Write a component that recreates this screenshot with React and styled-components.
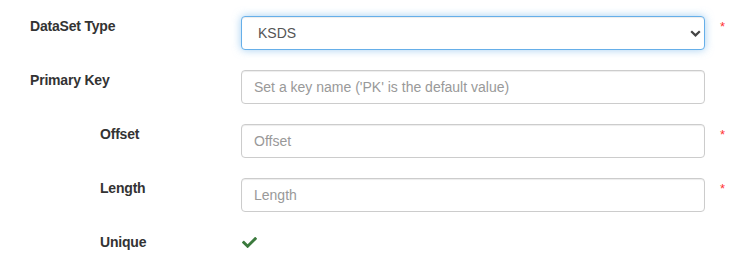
import React from "react";
import styled, { createGlobalStyle } from "styled-components";
import { FaCheck } from "react-icons/fa";

const Global = createGlobalStyle`
  html, body { margin: 0; padding: 0; background: #fff; }
  body { font-family: "Liberation Sans", Arial, sans-serif; font-size: 14px; line-height: 20px; color: #333; }
  * { box-sizing: border-box; }
`;

const Form = styled.form`
  display: grid;
  grid-template-columns: 211px 464px 40px;
  row-gap: 20px;
  padding: 16px 0 0 30px;
`;

const Label = styled.label`
  font-weight: bold;
  font-size: 14px;
  line-height: 20px;
  color: #333;
  padding-left: ${(p) => (p.$indent ? "70px" : "0")};
  letter-spacing: -0.2px;
`;

const Control = styled.div`
  position: relative;
  height: ${(p) => (p.$plain ? "20px" : "34px")};
  display: flex;
  align-items: center;
`;

const Input = styled.input`
  width: 100%;
  height: 34px;
  padding: 6px 12px;
  font-family: "Liberation Sans", Arial, sans-serif;
  font-size: 14px;
  line-height: 20px;
  color: #555;
  background: #fff;
  border: 1px solid #ccc;
  border-radius: 4px;
  box-shadow: inset 0 1px 1px rgba(0, 0, 0, 0.075);
  outline: none;
  &::placeholder { color: #999; }
`;

const Select = styled.select`
  width: 100%;
  height: 34px;
  padding: 6px 30px 6px 16px;
  font-family: "Liberation Sans", Arial, sans-serif;
  font-size: 14px;
  color: #555;
  background: #fff;
  border: 1px solid #66afe9;
  border-radius: 4px;
  box-shadow: inset 0 1px 1px rgba(0, 0, 0, 0.075), 0 0 8px rgba(102, 175, 233, 0.6);
  outline: none;
  appearance: none;
  -webkit-appearance: none;
`;

const Chevron = styled.svg`
  position: absolute;
  right: 4px;
  top: 14px;
  width: 11px;
  height: 7px;
  pointer-events: none;
`;

const Required = styled.span`
  color: #f33;
  font-size: 13px;
  line-height: 20px;
  padding: 1px 0 0 15px;
`;

const Check = styled(FaCheck)`
  color: #3b7a3d;
  width: 15px;
  height: 15px;
  margin-left: 1px;
`;

export default function App() {
  return (
    <>
      <Global />
      <Form onSubmit={(e) => e.preventDefault()}>
        <Label>DataSet Type</Label>
        <Control>
          <Select defaultValue="KSDS">
            <option>KSDS</option>
            <option>ESDS</option>
            <option>RRDS</option>
          </Select>
          <Chevron viewBox="0 0 11 7">
            <path d="M1.2 1.2 L5.5 5.4 L9.8 1.2" fill="none" stroke="#444" strokeWidth="2.2" />
          </Chevron>
        </Control>
        <Required>*</Required>

        <Label>Primary Key</Label>
        <Control>
          <Input placeholder="Set a key name ('PK' is the default value)" />
        </Control>
        <span />

        <Label $indent>Offset</Label>
        <Control>
          <Input placeholder="Offset" />
        </Control>
        <Required>*</Required>

        <Label $indent>Length</Label>
        <Control>
          <Input placeholder="Length" />
        </Control>
        <Required>*</Required>

        <Label $indent>Unique</Label>
        <Control $plain>
          <Check />
        </Control>
        <span />
      </Form>
    </>
  );
}
